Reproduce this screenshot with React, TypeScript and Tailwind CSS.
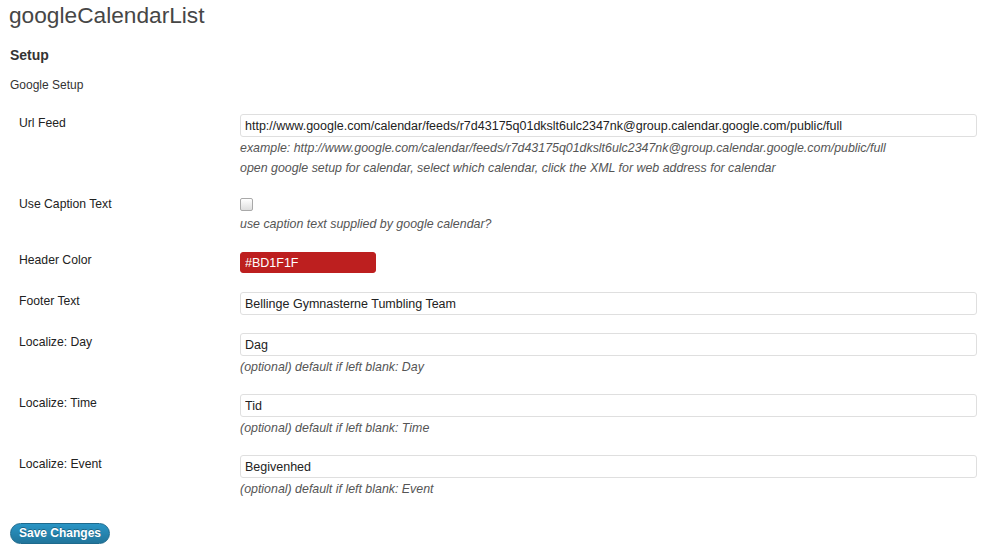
import React from "react";

const font = "font-['Liberation_Sans',Arial,Helvetica,sans-serif]";

type Row = {
  label: string;
  value?: string;
  kind?: "text" | "checkbox" | "color";
  notes?: string[];
};

const rows: Row[] = [
  {
    label: "Url Feed",
    value:
      "http://www.google.com/calendar/feeds/r7d43175q01dkslt6ulc2347nk@group.calendar.google.com/public/full",
    notes: [
      "example: http://www.google.com/calendar/feeds/r7d43175q01dkslt6ulc2347nk@group.calendar.google.com/public/full",
      "open google setup for calendar, select which calendar, click the XML for web address for calendar",
    ],
  },
  {
    label: "Use Caption Text",
    kind: "checkbox",
    notes: ["use caption text supplied by google calendar?"],
  },
  { label: "Header Color", value: "#BD1F1F", kind: "color" },
  { label: "Footer Text", value: "Bellinge Gymnasterne Tumbling Team" },
  {
    label: "Localize: Day",
    value: "Dag",
    notes: ["(optional) default if left blank: Day"],
  },
  {
    label: "Localize: Time",
    value: "Tid",
    notes: ["(optional) default if left blank: Time"],
  },
  {
    label: "Localize: Event",
    value: "Begivenhed",
    notes: ["(optional) default if left blank: Event"],
  },
];

function Field({ row }: { row: Row }) {
  if (row.kind === "checkbox") {
    return (
      <div className="flex h-[20px] items-center">
        <input
          type="checkbox"
          readOnly
          className="m-0 h-[13px] w-[13px] appearance-none rounded-[2px] border border-[#a9a9a9] bg-gradient-to-b from-[#ffffff] to-[#dedede]"
        />
      </div>
    );
  }
  if (row.kind === "color") {
    return (
      <input
        type="text"
        readOnly
        value={row.value}
        className={`${font} my-[2px] block h-[21px] w-[136px] rounded-[3px] border border-[#bd1f1f] bg-[#bd1f1f] px-[4px] text-[12.5px] text-white outline-none`}
      />
    );
  }
  return (
    <input
      type="text"
      readOnly
      value={row.value}
      className={`${font} my-[1px] block h-[23px] w-full rounded-[3px] border border-[#dfdfdf] bg-white px-[4px] text-[12.5px] text-[#222] outline-none`}
    />
  );
}

export default function App() {
  return (
    <div className={`${font} min-h-[560px] bg-white pl-[9px] pr-[11px] text-[12px] text-[#333]`}>
      <h2 className="pt-px text-[22.7px] font-normal leading-[29px] text-[#464646]">
        googleCalendarList
      </h2>
      <h3 className="mt-[17px] pl-px text-[14px] font-bold leading-[17px] text-[#333]">
        Setup
      </h3>
      <p className="mt-[14px] pl-px text-[12px] leading-[14px] text-[#333]">Google Setup</p>

      <div className="mt-[13px]">
        {rows.map((row) => (
          <div key={row.label} className="flex">
            <div className="w-[221px] shrink-0 pl-[10px] pt-[11px] text-[12.2px] leading-[14px] text-[#222]">
              {row.label}
            </div>
            <div className="min-w-0 flex-1 px-[10px] py-[8px]">
              <Field row={row} />
              {row.notes?.map((n) => (
                <p key={n} className="text-[12.4px] italic leading-[20px] text-[#555]">
                  {n}
                </p>
              ))}
            </div>
          </div>
        ))}
      </div>

      <div className="mt-[16px] pl-px">
        <button
          type="button"
          className="h-[21px] rounded-full border border-[#1e6a8d] bg-gradient-to-b from-[#2a95c5] to-[#21759b] px-[8px] text-[12px] font-bold leading-[19px] text-white [text-shadow:0_-1px_0_rgba(0,0,0,0.3)]"
        >
          Save Changes
        </button>
      </div>
    </div>
  );
}
